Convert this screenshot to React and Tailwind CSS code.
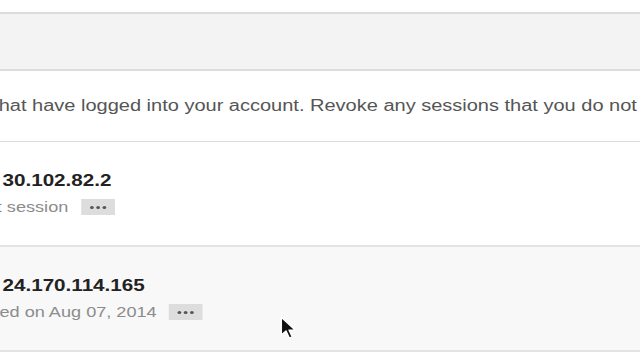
import React from "react";

const sessions = [
  { ip: "30.102.82.2", note: "Your current session", bg: "bg-white" },
  { ip: "24.170.114.165", note: "Last accessed on Aug 07, 2014", bg: "bg-[#f8f8f8]" },
];

const MoreButton = () => (
  <span className="ml-[10px] inline-flex h-[16px] w-[27px] items-center justify-center gap-[2px] bg-[#dddddd]">
    <span className="h-[3px] w-[3px] rounded-full bg-[#555]" />
    <span className="h-[3px] w-[3px] rounded-full bg-[#555]" />
    <span className="h-[3px] w-[3px] rounded-full bg-[#555]" />
  </span>
);

const SessionRow = ({ ip, note, bg }) => (
  <div className={`h-[105px] overflow-hidden border-b-2 border-[#e3e3e3] ${bg}`}>
    <div className="-ml-[77px] pt-[28px] whitespace-nowrap">
      <div className="pl-[79px] text-[16.5px] leading-5 font-bold text-[#222]">{ip}</div>
      <div className="mt-[7px] flex items-center text-[14.5px] leading-5 text-[#8c8c8c]">
        <span>{note}</span>
        <MoreButton />
      </div>
    </div>
  </div>
);

const Cursor = () => (
  <svg
    className="absolute left-[280px] top-[316px]"
    width="17"
    height="25"
    viewBox="0 0 13 21"
    preserveAspectRatio="none"
  >
    <path
      d="M1 1 L1 16 L4.6 12.6 L7.2 18.6 L9.4 17.6 L6.9 11.8 L11.6 11.8 Z"
      fill="#111"
      stroke="#fff"
      strokeWidth="1.1"
      strokeLinejoin="round"
    />
  </svg>
);

export default function App() {
  return (
    <div
      className="relative h-[360px] w-[640px] overflow-hidden bg-white"
      style={{ fontFamily: '"Liberation Sans", Arial, sans-serif' }}
    >
      <div className="w-[512px] origin-top-left scale-x-[1.25]">
        <div className="h-[12px]" />
        <div className="h-[59px] border-y-2 border-[#dcdcdc] bg-[#f3f3f3]" />
        <div className="h-[71px] overflow-hidden border-b border-[#dddddd] pt-[25px]">
          <p className="-ml-[170px] whitespace-nowrap text-[16px] leading-5 text-[#555]">
            This is a list of devices that have logged into your account. Revoke any sessions that you do not recognize.
          </p>
        </div>
        {sessions.map((s) => (
          <SessionRow key={s.ip} {...s} />
        ))}
      </div>
      <Cursor />
    </div>
  );
}
